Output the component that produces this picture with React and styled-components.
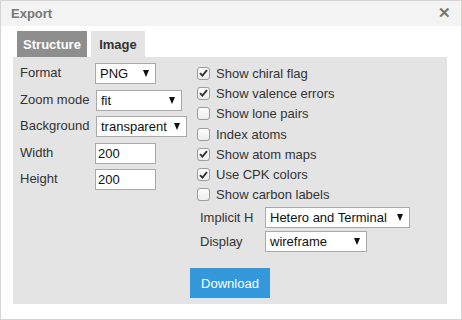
import React from 'react'
import styled, { createGlobalStyle } from 'styled-components'

const Global = createGlobalStyle`
    html, body {
        margin: 0;
        padding: 0;
        background: #ffffff;
    }
    body {
        font-family: "Liberation Sans", Arial, sans-serif;
        font-size: 13px;
        color: #333;
    }
`;

const Dialog = styled.div`
    width: 462px;
    height: 320px;
    box-sizing: border-box;
    border: 1px solid #d4d4d4;
    background: #fff;
    display: flex;
    flex-direction: column;
`;

const Header = styled.div`
    height: 25px;
    background: #f3f3f3;
    display: flex;
    align-items: center;
    justify-content: space-between;
    padding: 0 10px;
`;

const Title = styled.div`
    font-weight: bold;
    font-size: 13px;
    color: #777;
`;

const Close = styled.div`
    font-weight: bold;
    font-size: 15px;
    color: #777;
    margin-top: -1px;
`;

const Body = styled.div`
    padding: 5px 14px 0 12px;
`;

const Tabs = styled.div`
    display: flex;
    gap: 4px;
    padding-left: 4px;
`;

const Tab = styled.div`
    height: 26px;
    width: ${p => p.w}px;
    display: flex;
    align-items: center;
    justify-content: center;
    font-weight: bold;
    font-size: 13px;
    background: ${p => p.active ? '#8e8e8e' : '#e4e4e4'};
    color: ${p => p.active ? '#fff' : '#333'};
`;

const Panel = styled.div`
    background: #e4e4e4;
    height: 247px;
    box-sizing: border-box;
    padding: 6px 0 0 7px;
    display: flex;
`;

const LeftCol = styled.div`
    width: 174px;
    display: grid;
    grid-template-columns: 75px auto;
    grid-auto-rows: 21px;
    row-gap: 5.5px;
    align-items: center;
    align-content: start;
`;

const Label = styled.div`
    font-size: 13px;
    color: #333;
    margin-top: -2px;
`;

const Select = styled.div`
    width: ${p => p.w}px;
    height: 21px;
    box-sizing: border-box;
    border: 1px solid #a9a9a9;
    background: #fff;
    display: flex;
    align-items: center;
    justify-content: space-between;
    padding: 0 6px 0 4px;
    font-size: 13px;
    color: #111;
    margin-left: ${p => p.ml || 0}px;
`;

const Arrow = styled.span`
    width: 0;
    height: 0;
    border-left: 3.5px solid transparent;
    border-right: 3.5px solid transparent;
    border-top: 7px solid #111;
`;

const Input = styled.div`
    width: 61px;
    height: 21px;
    box-sizing: border-box;
    border: 1px solid #a9a9a9;
    background: #fff;
    display: flex;
    align-items: center;
    padding-left: 2px;
    font-size: 13px;
    color: #111;
`;

const RightCol = styled.div`
    display: flex;
    flex-direction: column;
    padding-left: 3px;
    padding-top: 0;
`;

const CheckRow = styled.div`
    height: 20.3px;
    display: flex;
    align-items: center;
    gap: 6px;
    font-size: 13px;
    color: #333;
`;

const Box = styled.span`
    width: 13px;
    height: 13px;
    box-sizing: border-box;
    border: 1px solid #9c9c9c;
    border-radius: 3px;
    background: linear-gradient(#fdfdfd, #ececec);
    display: flex;
    align-items: center;
    justify-content: center;
`;

const OptionRow = styled.div`
    display: flex;
    align-items: center;
    height: 21px;
    margin-top: ${p => p.mt}px;
    padding-left: 3px;
`;

const OptLabel = styled.div`
    width: 65px;
    font-size: 13px;
    color: #333;
`;

const Download = styled.div`
    margin-top: 16px;
    margin-left: -7px;
    width: 80px;
    height: 30px;
    background: #3498db;
    color: #fff;
    font-size: 13px;
    display: flex;
    align-items: center;
    justify-content: center;
`;

const Check = ({ on, children }) => (
    <CheckRow>
        <Box>
            {on && (
                <svg width="9" height="8" viewBox="0 0 9 8">
                    <path d="M1 4.2 L3.4 6.6 L8 1.2" fill="none" stroke="#333" strokeWidth="1.9" />
                </svg>
            )}
        </Box>
        {children}
    </CheckRow>
);

const checks = [
    ['Show chiral flag', true],
    ['Show valence errors', true],
    ['Show lone pairs', false],
    ['Index atoms', false],
    ['Show atom maps', true],
    ['Use CPK colors', true],
    ['Show carbon labels', false],
];

export default function App() {
    return (
        <>
            <Global />
            <Dialog>
                <Header>
                    <Title>Export</Title>
                    <Close>✕</Close>
                </Header>
                <Body>
                    <Tabs>
                        <Tab active w={70}>Structure</Tab>
                        <Tab w={54}>Image</Tab>
                    </Tabs>
                    <Panel>
                        <LeftCol>
                            <Label>Format</Label>
                            <Select w={61}>PNG<Arrow /></Select>
                            <Label>Zoom mode</Label>
                            <Select w={86} ml={1}>fit<Arrow /></Select>
                            <Label>Background</Label>
                            <Select w={91} ml={1}>transparent<Arrow /></Select>
                            <Label>Width</Label>
                            <Input>200</Input>
                            <Label>Height</Label>
                            <Input>200</Input>
                        </LeftCol>
                        <RightCol>
                            {checks.map(([t, on]) => <Check key={t} on={on}>{t}</Check>)}
                            <OptionRow mt={2}>
                                <OptLabel>Implicit H</OptLabel>
                                <Select w={145}>Hetero and Terminal<Arrow /></Select>
                            </OptionRow>
                            <OptionRow mt={3}>
                                <OptLabel>Display</OptLabel>
                                <Select w={102}>wireframe<Arrow /></Select>
                            </OptionRow>
                            <Download>Download</Download>
                        </RightCol>
                    </Panel>
                </Body>
            </Dialog>
        </>
    );
}
